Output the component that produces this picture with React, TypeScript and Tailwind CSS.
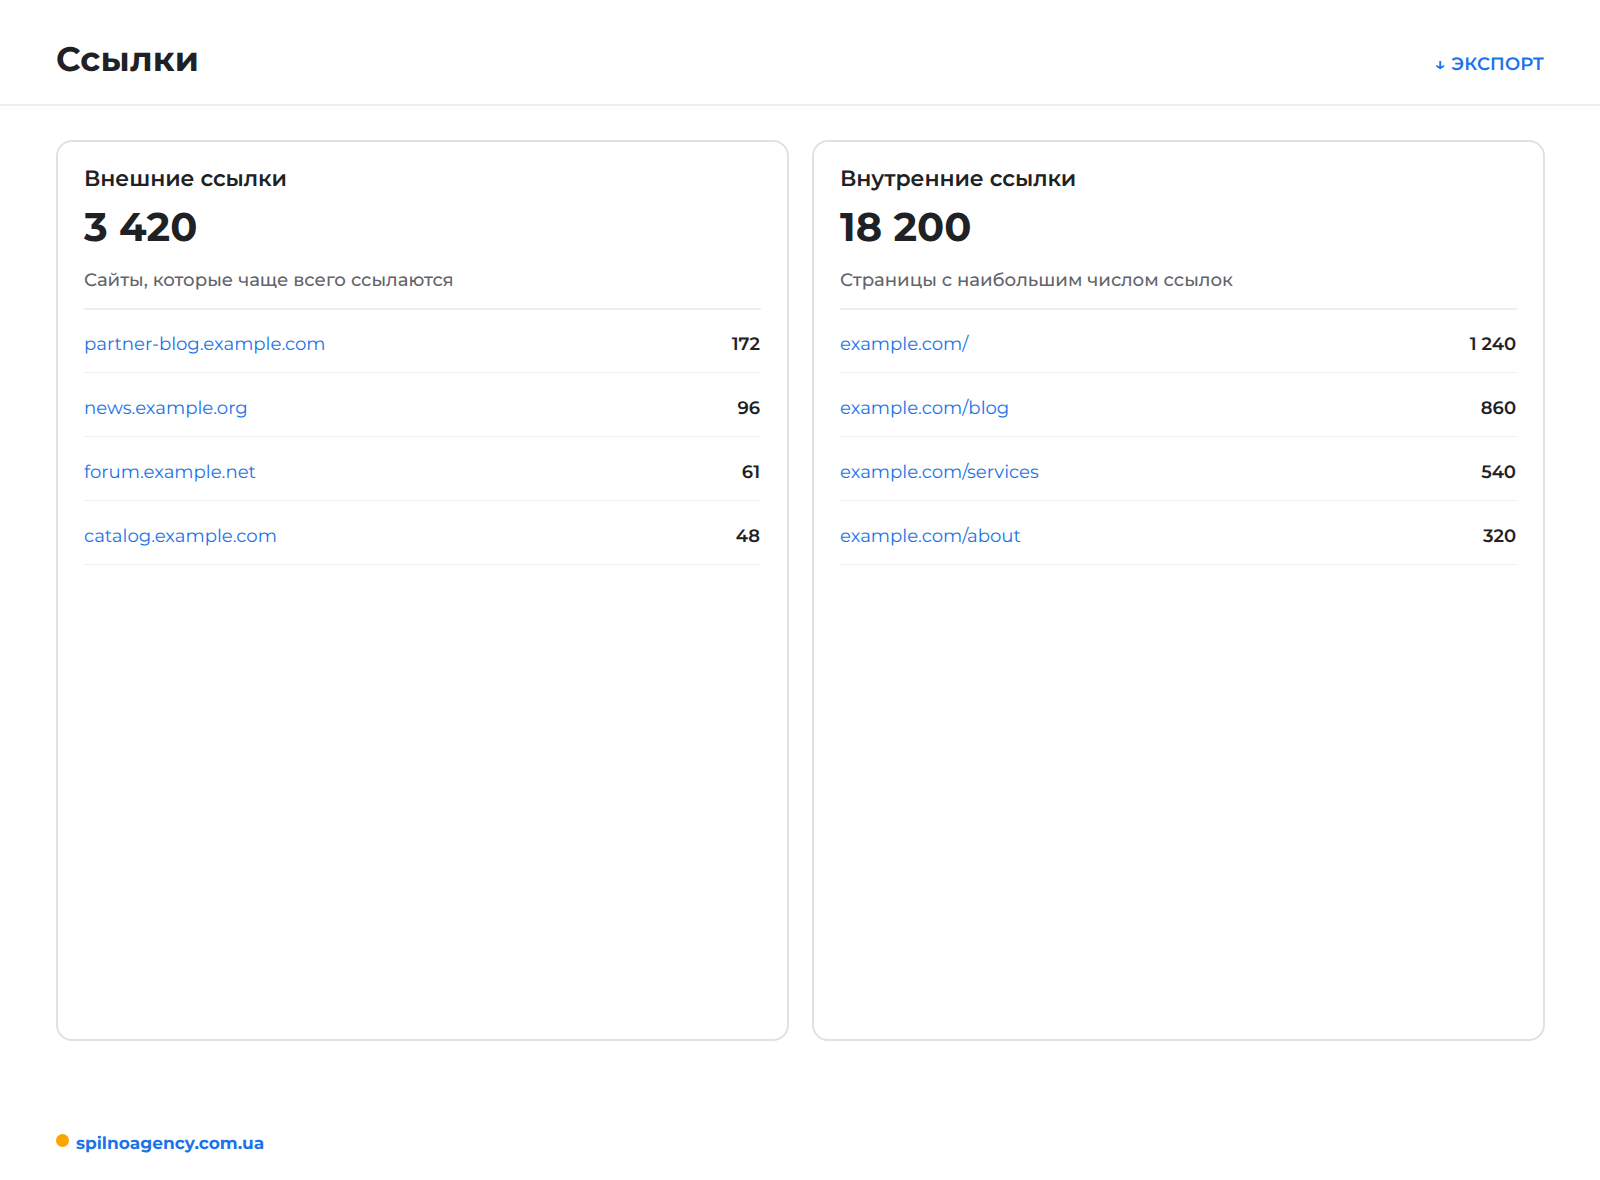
const FONT = 'font-["Montserrat","Inter","Liberation_Sans",sans-serif] [text-rendering:geometricPrecision]'

type Row = { label: string; value: string }

const external: Row[] = [
  { label: 'partner-blog.example.com', value: '172' },
  { label: 'news.example.org', value: '96' },
  { label: 'forum.example.net', value: '61' },
  { label: 'catalog.example.com', value: '48' },
]

const internal: Row[] = [
  { label: 'example.com/', value: '1 240' },
  { label: 'example.com/blog', value: '860' },
  { label: 'example.com/services', value: '540' },
  { label: 'example.com/about', value: '320' },
]

function LinkCard({ title, total, hint, rows }: { title: string; total: string; hint: string; rows: Row[] }) {
  return (
    <section className="h-[901px] rounded-[16px] border-2 border-[#e0e0e6] bg-white px-[26px] pt-5">
      <h2 className="text-[22px] leading-[34px] font-semibold tracking-[-0.1px] text-[#202124]">{title}</h2>
      <div className="mt-[7px] text-[40px] leading-[50px] font-bold text-[#202124]">{total}</div>
      <p className="mt-3 text-[18.15px] leading-[30px] font-medium text-[#63646a]">{hint}</p>
      <ul className="mt-[13px] border-t-2 border-[#eeeef2]">
        {rows.map((row) => (
          <li key={row.label} className="flex h-16 items-center justify-between border-b border-[#eeeef2] pt-2 first:h-[63px] first:pt-[6px]">
            <a className="mb-[2px] text-[18.1px] leading-[27px] text-[#1a73e8]">{row.label}</a>
            <span className="pr-px text-[18px] leading-[27px] font-semibold text-[#202124]">{row.value}</span>
          </li>
        ))}
      </ul>
    </section>
  )
}

export default function App() {
  return (
    <div className={`flex h-[1180px] flex-col bg-white ${FONT}`}>
      <header className="flex h-[106px] items-center justify-between border-b-2 border-[#eeeef2] px-14 pt-[14px]">
        <h1 className="text-[34px] leading-[44px] font-bold tracking-[0.2px] text-[#202124]">Ссылки</h1>
        <a className="mt-[10px] flex items-center gap-[6px] text-[18px] font-semibold tracking-[0.15px] text-[#1a73e8]">
          <span className="text-[18px]">↓</span>
          ЭКСПОРТ
        </a>
      </header>
      <main className="grid grid-cols-2 gap-[23px] pl-14 pr-[55px] pt-[34px]">
        <LinkCard title="Внешние ссылки" total="3 420" hint="Сайты, которые чаще всего ссылаются" rows={external} />
        <LinkCard title="Внутренние ссылки" total="18 200" hint="Страницы с наибольшим числом ссылок" rows={internal} />
      </main>
      <footer className="mt-[86px] flex items-center gap-[7px] px-14">
        <span className="mb-[3px] h-[13px] w-[13px] rounded-full bg-[#f9a400]" />
        <span className="mt-[5px] text-[17px] font-bold text-[#1a73e8]">spilnoagency.com.ua</span>
      </footer>
    </div>
  )
}
